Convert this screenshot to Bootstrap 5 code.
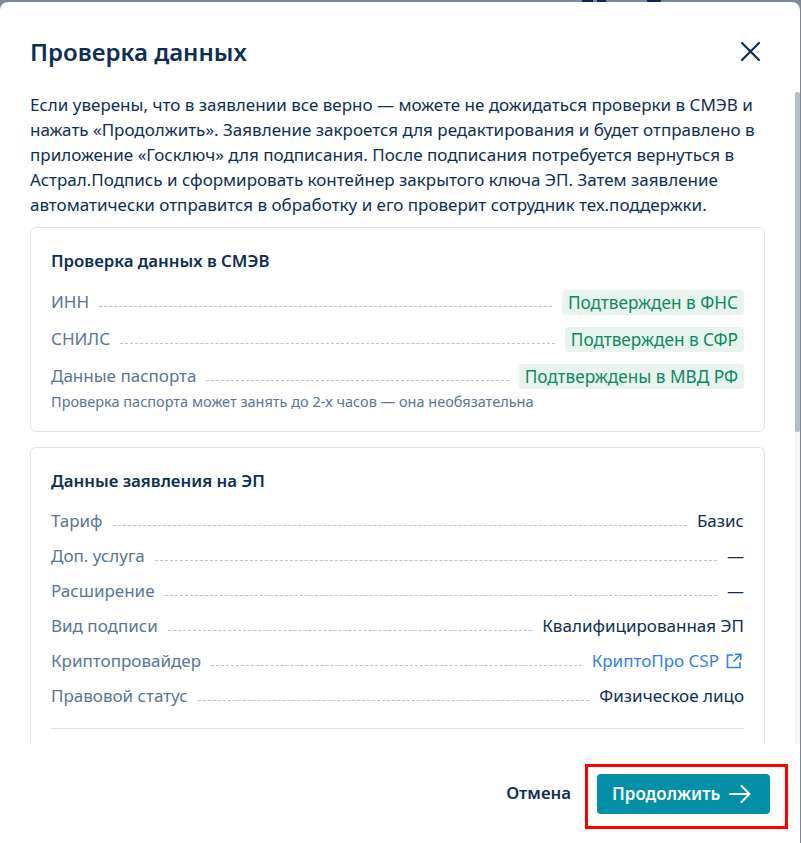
<!DOCTYPE html>
<html lang="ru">
<head>
<meta charset="utf-8">
<link href="https://cdn.jsdelivr.net/npm/bootstrap@5.3.0/dist/css/bootstrap.min.css" rel="stylesheet">
<style>
html,body{height:100%;margin:0;overflow:hidden}
body{background:#7d8896;font-family:"Noto Sans","Open Sans",sans-serif;color:#0e2e56}
.sheet{height:841px;margin-top:2px;background:#fff;border-radius:8px 8px 0 0;margin-right:1px}
.sheet-head{padding:35px 30px 0 30px;height:90px}
.sheet-title{font-size:24px;font-weight:600;line-height:30px;color:#0e2e56;margin:0}
.x-btn{display:block;width:24px;height:24px;padding:0;border:0;background:none;margin:3px 8px 0 0}
.x-btn svg{display:block}
.sheet-main{height:652px;overflow:hidden;padding:0 35px 0 30px}
.intro{font-size:17px;line-height:25px;margin:0 0 10px;color:#0e2e56;white-space:nowrap}
.panel{border:1px solid #dde3ea;border-radius:6px;padding:23px 20px 0;margin-bottom:15px}
.panel-a{height:205px}
.panel-b{height:320px;border-bottom:0;border-radius:6px 6px 0 0}
.panel-h{font-size:16.8px;font-weight:600;line-height:20px;margin:0 0 19px}
.ln{display:flex;align-items:flex-end;font-size:17px;line-height:22px;height:22px;color:#5a7598}
.ln+.ln{margin-top:13px}
.ln.lnc{height:25px;margin:0 0 12px;align-items:center}
.ln.lnc.last{margin-bottom:0}
.lnc .lab{margin-bottom:2px}
.dots{flex:1;border-bottom:1px dashed #b8c4d4;margin:0 10px;height:1px;align-self:center;position:relative;top:4px}
.val{color:#0e2e56}
.ok{background:#e8f3ee;color:#0a8a62;border-radius:4px;padding:0 6px;line-height:25px;height:25px;font-size:17.2px}
.note{font-size:14.5px;line-height:18px;color:#5a7598;margin-top:3px;white-space:nowrap}
.ext{color:#2f80ed;text-decoration:none;display:flex;align-items:center;gap:7px;margin-right:2px}
.rule{border-top:1px solid #dde3ea;margin:21px 0 0}
.sheet-foot{height:99px;padding:20px 12px 0 0}
.cancel{font-size:16.8px;font-weight:600;color:#0e2e56;background:none;border:0;padding:0;margin:17px 14px 0 0;line-height:24px}
.go{background:#038fa8;color:#fff;font-size:17px;font-weight:600;border:0;border-radius:4px;width:173px;height:40px;padding:0 0 0 15px;display:flex;align-items:center;gap:9px}
.mark-box{border:3px solid #f00;padding:7px 15px 12px 9px}
.scroll-track{position:absolute;right:1px;top:92px;width:5px;height:652px;background:#f3f4f6}
.scroll-thumb{width:5px;height:340px;background:#b5bdc8;border-radius:3px}
.backdark{position:absolute;top:0;height:2px;background:#0c2a50}
.bd1{left:582px;width:11px}
.bd2{left:597px;width:9px}
.bd3{left:647px;width:14px}
</style>
</head>
<body>
<div class="backdark bd1"></div>
<div class="backdark bd2"></div>
<div class="backdark bd3"></div>
<div class="sheet">
  <div class="sheet-head d-flex justify-content-between align-items-start">
    <h5 class="sheet-title">Проверка данных</h5>
    <button class="x-btn" aria-label="Закрыть"><svg width="24" height="24" viewBox="0 0 24 24" fill="none" stroke="#0e2e56" stroke-width="2.2" stroke-linecap="round"><path d="M4 3l17 17M21 3L4 20"/></svg></button>
  </div>
  <div class="sheet-main">
    <p class="intro">Если уверены, что в заявлении все верно — можете не дожидаться проверки в СМЭВ и<br>нажать «Продолжить». Заявление закроется для редактирования и будет отправлено в<br>приложение «Госключ» для подписания. После подписания потребуется вернуться в<br>Астрал.Подпись и сформировать контейнер закрытого ключа ЭП. Затем заявление<br>автоматически отправится в обработку и его проверит сотрудник тех.поддержки.</p>
    <div class="card panel panel-a">
      <h6 class="panel-h">Проверка данных в СМЭВ</h6>
      <div class="ln lnc"><span class="lab">ИНН</span><span class="dots"></span><span class="ok">Подтвержден в ФНС</span></div>
      <div class="ln lnc"><span class="lab">СНИЛС</span><span class="dots"></span><span class="ok">Подтвержден в СФР</span></div>
      <div class="ln lnc last"><span class="lab">Данные паспорта</span><span class="dots"></span><span class="ok">Подтверждены в МВД РФ</span></div>
      <div class="note">Проверка паспорта может занять до 2-х часов — она необязательна</div>
    </div>
    <div class="card panel panel-b">
      <h6 class="panel-h">Данные заявления на ЭП</h6>
      <div class="ln"><span>Тариф</span><span class="dots"></span><span class="val">Базис</span></div>
      <div class="ln"><span>Доп. услуга</span><span class="dots"></span><span class="val">—</span></div>
      <div class="ln"><span>Расширение</span><span class="dots"></span><span class="val">—</span></div>
      <div class="ln"><span>Вид подписи</span><span class="dots"></span><span class="val">Квалифицированная ЭП</span></div>
      <div class="ln"><span>Криптопровайдер</span><span class="dots"></span><a class="ext" href="#">КриптоПро CSP<svg width="16" height="16" viewBox="0 0 16 16" fill="none" stroke="#2f80ed" stroke-width="1.6"><path d="M7 2H1.500v12.500H14V9M9 1.200h5.800V7M14.500 1.500L7.500 8.500"/></svg></a></div>
      <div class="ln"><span>Правовой статус</span><span class="dots"></span><span class="val">Физическое лицо</span></div>
      <div class="rule"></div>
    </div>
  </div>
  <div class="sheet-foot d-flex justify-content-end align-items-start">
    <button class="cancel">Отмена</button>
    <div class="mark-box"><button class="go">Продолжить<svg width="22" height="18" viewBox="0 0 22 18" fill="none" stroke="#fff" stroke-width="2" stroke-linecap="round" stroke-linejoin="round"><path d="M1 9h19M12.500 1l8 8-8 8"/></svg></button></div>
  </div>
</div>
<div class="scroll-track"><div class="scroll-thumb"></div></div>
<script src="https://cdn.jsdelivr.net/npm/bootstrap@5.3.0/dist/js/bootstrap.bundle.min.js"></script>
</body>
</html>
